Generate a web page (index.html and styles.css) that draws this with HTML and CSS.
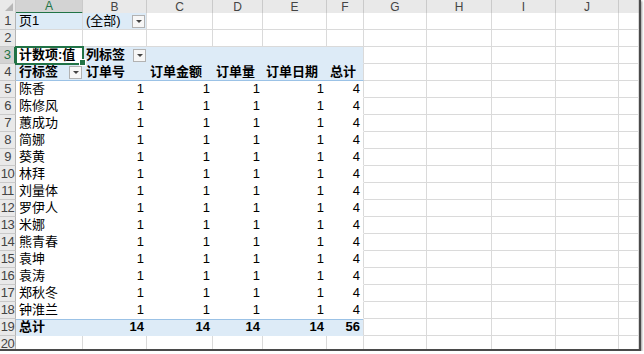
FILE: index.html
```html
<!DOCTYPE html>
<html lang="zh-CN">
<head>
    <meta charset="UTF-8">
    <meta name="viewport" content="width=device-width, initial-scale=1.0">
    <title>数据透视表</title>
    <link rel="stylesheet" href="styles.css">
</head>
<body>
    <!-- 엑셀 시트 화면: 헤더 + 20행 -->
    <div class="sheet">
        <div class="row hdr">
            <div class="corner"></div>
            <div class="ch sel">A</div>
            <div class="ch">B</div>
            <div class="ch">C</div>
            <div class="ch">D</div>
            <div class="ch">E</div>
            <div class="ch">F</div>
            <div class="ch">G</div>
            <div class="ch">H</div>
            <div class="ch">I</div>
            <div class="ch">J</div>
            <div class="ch"></div>
        </div>

        <div class="row">
            <div class="rh">1</div>
            <div class="c fill">页1</div>
            <div class="c fill">(全部)<span class="dd"></span></div>
            <div class="c"></div><div class="c"></div><div class="c"></div><div class="c"></div>
            <div class="c"></div><div class="c"></div><div class="c"></div><div class="c"></div><div class="c"></div>
        </div>
        <div class="row">
            <div class="rh">2</div>
            <div class="c"></div><div class="c"></div>
            <div class="c"></div><div class="c"></div><div class="c"></div><div class="c"></div>
            <div class="c"></div><div class="c"></div><div class="c"></div><div class="c"></div><div class="c"></div>
        </div>
        <div class="row">
            <div class="rh sel">3</div>
            <div class="pv b active">计数项:值</div>
            <div class="pv fill b">列标签<span class="dd"></span></div>
            <div class="pv fill"></div><div class="pv fill"></div><div class="pv fill"></div><div class="pv fill"></div>
            <div class="c"></div><div class="c"></div><div class="c"></div><div class="c"></div><div class="c"></div>
        </div>
        <div class="row head">
            <div class="rh">4</div>
            <div class="pv fill b">行标签<span class="dd"></span></div>
            <div class="pv fill b">订单号</div>
            <div class="pv fill b">订单金额</div>
            <div class="pv fill b">订单量</div>
            <div class="pv fill b">订单日期</div>
            <div class="pv fill b">总计</div>
            <div class="c"></div><div class="c"></div><div class="c"></div><div class="c"></div><div class="c"></div>
        </div>

        <div class="row">
            <div class="rh">5</div><div class="pv">陈香</div>
            <div class="pv n">1</div><div class="pv n">1</div><div class="pv n">1</div><div class="pv n">1</div><div class="pv n">4</div>
            <div class="c"></div><div class="c"></div><div class="c"></div><div class="c"></div><div class="c"></div>
        </div>
        <div class="row">
            <div class="rh">6</div><div class="pv">陈修风</div>
            <div class="pv n">1</div><div class="pv n">1</div><div class="pv n">1</div><div class="pv n">1</div><div class="pv n">4</div>
            <div class="c"></div><div class="c"></div><div class="c"></div><div class="c"></div><div class="c"></div>
        </div>
        <div class="row">
            <div class="rh">7</div><div class="pv">蕙成功</div>
            <div class="pv n">1</div><div class="pv n">1</div><div class="pv n">1</div><div class="pv n">1</div><div class="pv n">4</div>
            <div class="c"></div><div class="c"></div><div class="c"></div><div class="c"></div><div class="c"></div>
        </div>
        <div class="row">
            <div class="rh">8</div><div class="pv">简娜</div>
            <div class="pv n">1</div><div class="pv n">1</div><div class="pv n">1</div><div class="pv n">1</div><div class="pv n">4</div>
            <div class="c"></div><div class="c"></div><div class="c"></div><div class="c"></div><div class="c"></div>
        </div>
        <div class="row">
            <div class="rh">9</div><div class="pv">葵黄</div>
            <div class="pv n">1</div><div class="pv n">1</div><div class="pv n">1</div><div class="pv n">1</div><div class="pv n">4</div>
            <div class="c"></div><div class="c"></div><div class="c"></div><div class="c"></div><div class="c"></div>
        </div>
        <div class="row">
            <div class="rh">10</div><div class="pv">林拜</div>
            <div class="pv n">1</div><div class="pv n">1</div><div class="pv n">1</div><div class="pv n">1</div><div class="pv n">4</div>
            <div class="c"></div><div class="c"></div><div class="c"></div><div class="c"></div><div class="c"></div>
        </div>
        <div class="row">
            <div class="rh">11</div><div class="pv">刘量体</div>
            <div class="pv n">1</div><div class="pv n">1</div><div class="pv n">1</div><div class="pv n">1</div><div class="pv n">4</div>
            <div class="c"></div><div class="c"></div><div class="c"></div><div class="c"></div><div class="c"></div>
        </div>
        <div class="row">
            <div class="rh">12</div><div class="pv">罗伊人</div>
            <div class="pv n">1</div><div class="pv n">1</div><div class="pv n">1</div><div class="pv n">1</div><div class="pv n">4</div>
            <div class="c"></div><div class="c"></div><div class="c"></div><div class="c"></div><div class="c"></div>
        </div>
        <div class="row">
            <div class="rh">13</div><div class="pv">米娜</div>
            <div class="pv n">1</div><div class="pv n">1</div><div class="pv n">1</div><div class="pv n">1</div><div class="pv n">4</div>
            <div class="c"></div><div class="c"></div><div class="c"></div><div class="c"></div><div class="c"></div>
        </div>
        <div class="row">
            <div class="rh">14</div><div class="pv">熊青春</div>
            <div class="pv n">1</div><div class="pv n">1</div><div class="pv n">1</div><div class="pv n">1</div><div class="pv n">4</div>
            <div class="c"></div><div class="c"></div><div class="c"></div><div class="c"></div><div class="c"></div>
        </div>
        <div class="row">
            <div class="rh">15</div><div class="pv">袁坤</div>
            <div class="pv n">1</div><div class="pv n">1</div><div class="pv n">1</div><div class="pv n">1</div><div class="pv n">4</div>
            <div class="c"></div><div class="c"></div><div class="c"></div><div class="c"></div><div class="c"></div>
        </div>
        <div class="row">
            <div class="rh">16</div><div class="pv">袁涛</div>
            <div class="pv n">1</div><div class="pv n">1</div><div class="pv n">1</div><div class="pv n">1</div><div class="pv n">4</div>
            <div class="c"></div><div class="c"></div><div class="c"></div><div class="c"></div><div class="c"></div>
        </div>
        <div class="row">
            <div class="rh">17</div><div class="pv">郑秋冬</div>
            <div class="pv n">1</div><div class="pv n">1</div><div class="pv n">1</div><div class="pv n">1</div><div class="pv n">4</div>
            <div class="c"></div><div class="c"></div><div class="c"></div><div class="c"></div><div class="c"></div>
        </div>
        <div class="row">
            <div class="rh">18</div><div class="pv">钟淮兰</div>
            <div class="pv n">1</div><div class="pv n">1</div><div class="pv n">1</div><div class="pv n">1</div><div class="pv n">4</div>
            <div class="c"></div><div class="c"></div><div class="c"></div><div class="c"></div><div class="c"></div>
        </div>
        <div class="row total">
            <div class="rh">19</div><div class="pv fill b">总计</div>
            <div class="pv fill b n">14</div><div class="pv fill b n">14</div><div class="pv fill b n">14</div><div class="pv fill b n">14</div><div class="pv fill b n">56</div>
            <div class="c"></div><div class="c"></div><div class="c"></div><div class="c"></div><div class="c"></div>
        </div>
        <div class="row">
            <div class="rh">20</div>
            <div class="c"></div><div class="c"></div>
            <div class="c"></div><div class="c"></div><div class="c"></div><div class="c"></div>
            <div class="c"></div><div class="c"></div><div class="c"></div><div class="c"></div><div class="c"></div>
        </div>
    </div>
</body>
</html>
```

FILE: styles.css
```css
* {
    padding: 0;
    margin: 0;
    box-sizing: border-box;
}

body {
    background-color: white;
    font-family: "Liberation Sans", "Noto Sans CJK SC", sans-serif;
    font-size: 13px;
    color: #000;
}

/* 캡처 테두리 */
.sheet {
    width: 641px;
    height: 351px;
    overflow: hidden;
    border-right: 2px solid #4a4a4a;
    border-bottom: 2px solid #4a4a4a;
    box-shadow: 1px 1px 2px #9a9a9a;
}

.row {
    display: grid;
    grid-template-columns: 16px 67px 64px 66px 50px 64px 37px 63px 65px 64px 63px 1fr;
    height: 17px;
}

.row > div {
    display: flex;
    align-items: center;
    padding: 0 3px;
    white-space: nowrap;
    line-height: 16px;
}

/* 열 머리글 */
.hdr {
    height: 13px;
    overflow: hidden;
}

.hdr > div {
    background-color: #e9e9e9;
    border-right: 1px solid #cacaca;
    border-bottom: 1px solid #b5b5b5;
    justify-content: center;
    font-size: 12px;
    color: #444;
    line-height: 12px;
}

.hdr > .sel {
    background-color: #d3d3d3;
    border-bottom: 2px solid #217346;
    color: #217346;
}

.hdr > .corner {
    position: relative;
}

.corner::after {
    content: "";
    position: absolute;
    right: 2px;
    bottom: 2px;
    border-left: 8px solid transparent;
    border-bottom: 8px solid #b7b7b7;
}

/* 행 머리글 */
.rh {
    background-color: #e9e9e9;
    border-right: 1px solid #b5b5b5;
    border-bottom: 1px solid #cacaca;
    justify-content: center;
    color: #444;
    font-size: 13px;
    padding: 0 !important;
    letter-spacing: -0.5px;
}

.rh.sel {
    background-color: #d3d3d3;
    border-right: 2px solid #217346;
    color: #217346;
}

/* 일반 셀 (눈금선) */
.c {
    border-right: 1px solid #dadada;
    border-bottom: 1px solid #dadada;
}

/* 피벗 영역 셀 */
.pv {
    border-bottom: 1px solid transparent;
}

.row > .pv:nth-child(7) {
    border-right: 1px solid #dadada;
}

.fill {
    background-color: #ddebf7;
}

.b {
    font-weight: bold;
}

.n {
    justify-content: flex-end;
}

.head > .pv {
    border-bottom-color: #9bc2e6;
}

.total > .pv {
    box-shadow: inset 0 1px 0 #9bc2e6;
}

.active {
    position: relative;
    outline: 2px solid #217346;
    outline-offset: -1px;
    z-index: 1;
}

.active::after {
    content: "";
    position: absolute;
    right: -3px;
    bottom: -3px;
    width: 5px;
    height: 5px;
    background-color: #217346;
    border: 1px solid white;
}

/* 필터 버튼 */
.dd {
    position: relative;
    margin-left: auto;
    margin-right: -2px;
    width: 13px;
    height: 13px;
    flex-shrink: 0;
    background-color: #f7f7f7;
    border: 1px solid #b2b2b2;
}

.dd::after {
    content: "";
    position: absolute;
    left: 3px;
    top: 4px;
    border-left: 3px solid transparent;
    border-right: 3px solid transparent;
    border-top: 3px solid #444;
}
```
